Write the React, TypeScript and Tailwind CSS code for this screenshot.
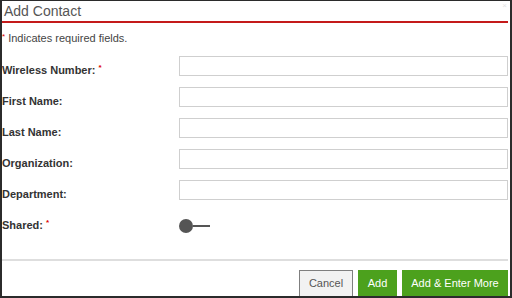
const fields = [
  { label: "Wireless Number:", required: true },
  { label: "First Name:" },
  { label: "Last Name:" },
  { label: "Organization:" },
  { label: "Department:" },
];

function Star() {
  return <span className="relative -top-[4px] ml-[3px] text-[8px] font-bold text-[#d00]">*</span>;
}

export default function App() {
  return (
    <div className="h-[298px] w-[512px] overflow-hidden border-t border-l-2 border-r-2 border-b-2 border-[#2b2b2b] bg-white font-['Liberation_Sans',Arial,sans-serif] text-[11px] text-[#333]">
      <div className="mr-[2px] flex h-[22px] items-start justify-between border-b-2 border-[#c41a1a] pl-[2px]">
        <h1 className="pt-[2px] text-[14px] leading-[17px] text-[#555]">Add Contact</h1>
        <span className="pr-[1px] text-[8px] leading-[10px] text-[#e4e4e4]">×</span>
      </div>

      <p className="mt-[8px] leading-[14px] text-[#444]">
        <span className="relative -top-[3px] text-[8px] text-[#d00]">*</span> Indicates required fields.
      </p>

      <div className="mt-[9px] mr-[2px] flex flex-col">
        {fields.map((f) => (
          <div key={f.label} className="flex h-[31px] items-start">
            <label className="w-[177px] pt-[7px] font-bold leading-[14px] text-[#333]">
              {f.label}
              {f.required && <Star />}
            </label>
            <input className="h-[20px] flex-1 border border-[#cfcfcf] bg-white outline-none" />
          </div>
        ))}
        <div className="flex h-[21px] items-start">
          <label className="w-[177px] pt-[7px] font-bold leading-[14px] text-[#333]">
            Shared:
            <Star />
          </label>
          <div className="mt-[8px] flex items-center">
            <span className="h-[14px] w-[14px] rounded-full bg-[#555]" />
            <span className="h-[2px] w-[17px] bg-[#555]" />
          </div>
        </div>
      </div>

      <div className="mt-[27px] mr-[2px] border-t-2 border-[#dedede]" />

      <div className="mt-[9px] mr-[2px] flex justify-end gap-[5px]">
        <button className="h-[27px] w-[54px] border border-[#7f7f7f] bg-[#f2f2f2] text-[11px] text-[#555]">
          Cancel
        </button>
        <button className="h-[27px] w-[39px] bg-[#4ca11d] text-[11px] text-white">Add</button>
        <button className="h-[27px] w-[106px] bg-[#4ca11d] text-[11px] text-white">Add &amp; Enter More</button>
      </div>
    </div>
  );
}
